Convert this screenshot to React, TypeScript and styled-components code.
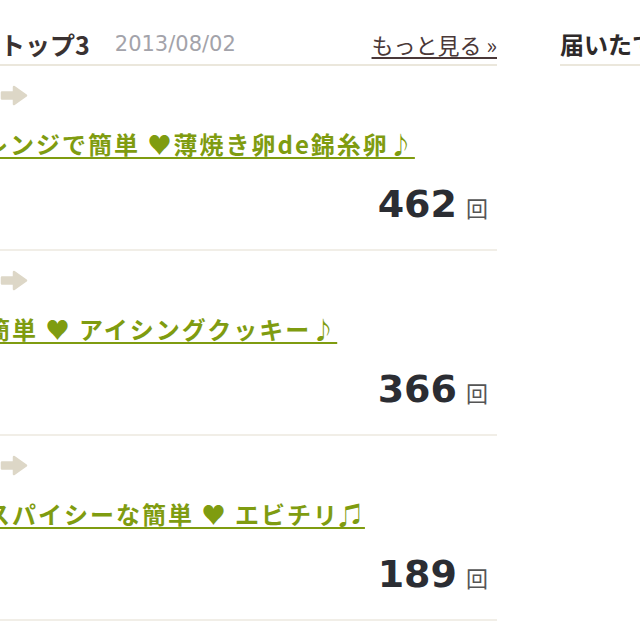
import React from "react";
import styled, { createGlobalStyle } from "styled-components";

const Global = createGlobalStyle`
  html, body { margin: 0; padding: 0; background: #ffffff; }
  body { font-family: "DejaVu Sans", "Noto Sans CJK JP", sans-serif; overflow: hidden; }
`;

const Page = styled.div`
  width: 640px;
  height: 640px;
  overflow: hidden;
  display: grid;
  grid-template-columns: 497px 80px;
  column-gap: 63px;
  align-items: start;
`;

const Column = styled.section`
  display: flex;
  flex-direction: column;
  min-width: 0;
`;

const Header = styled.header`
  display: flex;
  align-items: center;
  height: 40px;
  padding-top: 24px;
  border-bottom: 2px solid #ebe7dc;
  white-space: nowrap;
  overflow: hidden;
`;

const HeadTitle = styled.h2`
  margin: 0;
  font-family: "Noto Sans CJK JP", sans-serif;
  font-weight: 700;
  font-size: 25px;
  line-height: 30px;
  color: #3a3232;
`;

const DateText = styled.span`
  margin-left: 25px;
  font-family: "DejaVu Sans", sans-serif;
  font-size: 21px;
  color: #a3a3aa;
  line-height: 30px;
`;

const MoreLink = styled.a`
  margin-left: auto;
  font-family: "Noto Sans CJK JP", sans-serif;
  font-size: 22px;
  line-height: 30px;
  color: #4a3838;
  text-decoration: underline;
  text-underline-offset: 3px;
`;

const Row = styled.article`
  display: flex;
  flex-direction: column;
  padding: 18px 0 25px;
  border-bottom: 2px solid #f1eee7;
`;

const ArrowIcon = styled.svg`
  display: block;
  width: 28px;
  height: 23px;
`;

const TitleLink = styled.a<{ $shift: number }>`
  display: block;
  margin-top: 22px;
  margin-left: ${(p) => p.$shift}px;
  font-family: "Noto Sans CJK JP", sans-serif;
  font-weight: 700;
  font-size: 24px;
  letter-spacing: 2px;
  line-height: 30px;
  color: #7f9c10;
  text-decoration: underline;
  text-decoration-thickness: 2px;
  text-underline-offset: 3px;
  white-space: nowrap;
`;

const Count = styled.div`
  display: flex;
  justify-content: flex-end;
  align-items: baseline;
  margin-top: 25px;
  padding-right: 9px;
  height: 40px;
`;

const CountNum = styled.span`
  font-family: "DejaVu Sans", sans-serif;
  font-weight: 700;
  font-size: 38px;
  line-height: 40px;
  color: #2b2d33;
`;

const CountUnit = styled.span`
  margin-left: 9px;
  font-family: "Noto Sans CJK JP", sans-serif;
  font-size: 22px;
  color: #555555;
`;

const SideTitle = styled.h2`
  margin: 0;
  font-family: "Noto Sans CJK JP", sans-serif;
  font-weight: 700;
  font-size: 24px;
  line-height: 30px;
  color: #2e2a2a;
  white-space: nowrap;
`;

const Arrow = () => (
  <ArrowIcon viewBox="0 0 28 23">
    <path
      d="M2 8.5 H14 V3 L26 11.5 L14 20 V14.5 H2 Z"
      fill="#ddd7c7"
      stroke="#ddd7c7"
      strokeWidth="2.5"
      strokeLinejoin="round"
    />
  </ArrowIcon>
);

const items = [
  { title: "レンジで簡単 ♥薄焼き卵de錦糸卵♪", shift: -16, count: 462 },
  { title: "簡単 ♥ アイシングクッキー♪", shift: -14, count: 366 },
  { title: "スパイシーな簡単 ♥ エビチリ♫", shift: -14, count: 189 },
];

export default function App() {
  return (
    <>
      <Global />
      <Page>
        <Column>
          <Header>
            <HeadTitle>トップ3</HeadTitle>
            <DateText>2013/08/02</DateText>
            <MoreLink href="#">もっと見る »</MoreLink>
          </Header>
          {items.map((it) => (
            <Row key={it.count}>
              <Arrow />
              <TitleLink href="#" $shift={it.shift}>
                {it.title}
              </TitleLink>
              <Count>
                <CountNum>{it.count}</CountNum>
                <CountUnit>回</CountUnit>
              </Count>
            </Row>
          ))}
        </Column>
        <Column>
          <Header>
            <SideTitle>届いたておき</SideTitle>
          </Header>
        </Column>
      </Page>
    </>
  );
}
